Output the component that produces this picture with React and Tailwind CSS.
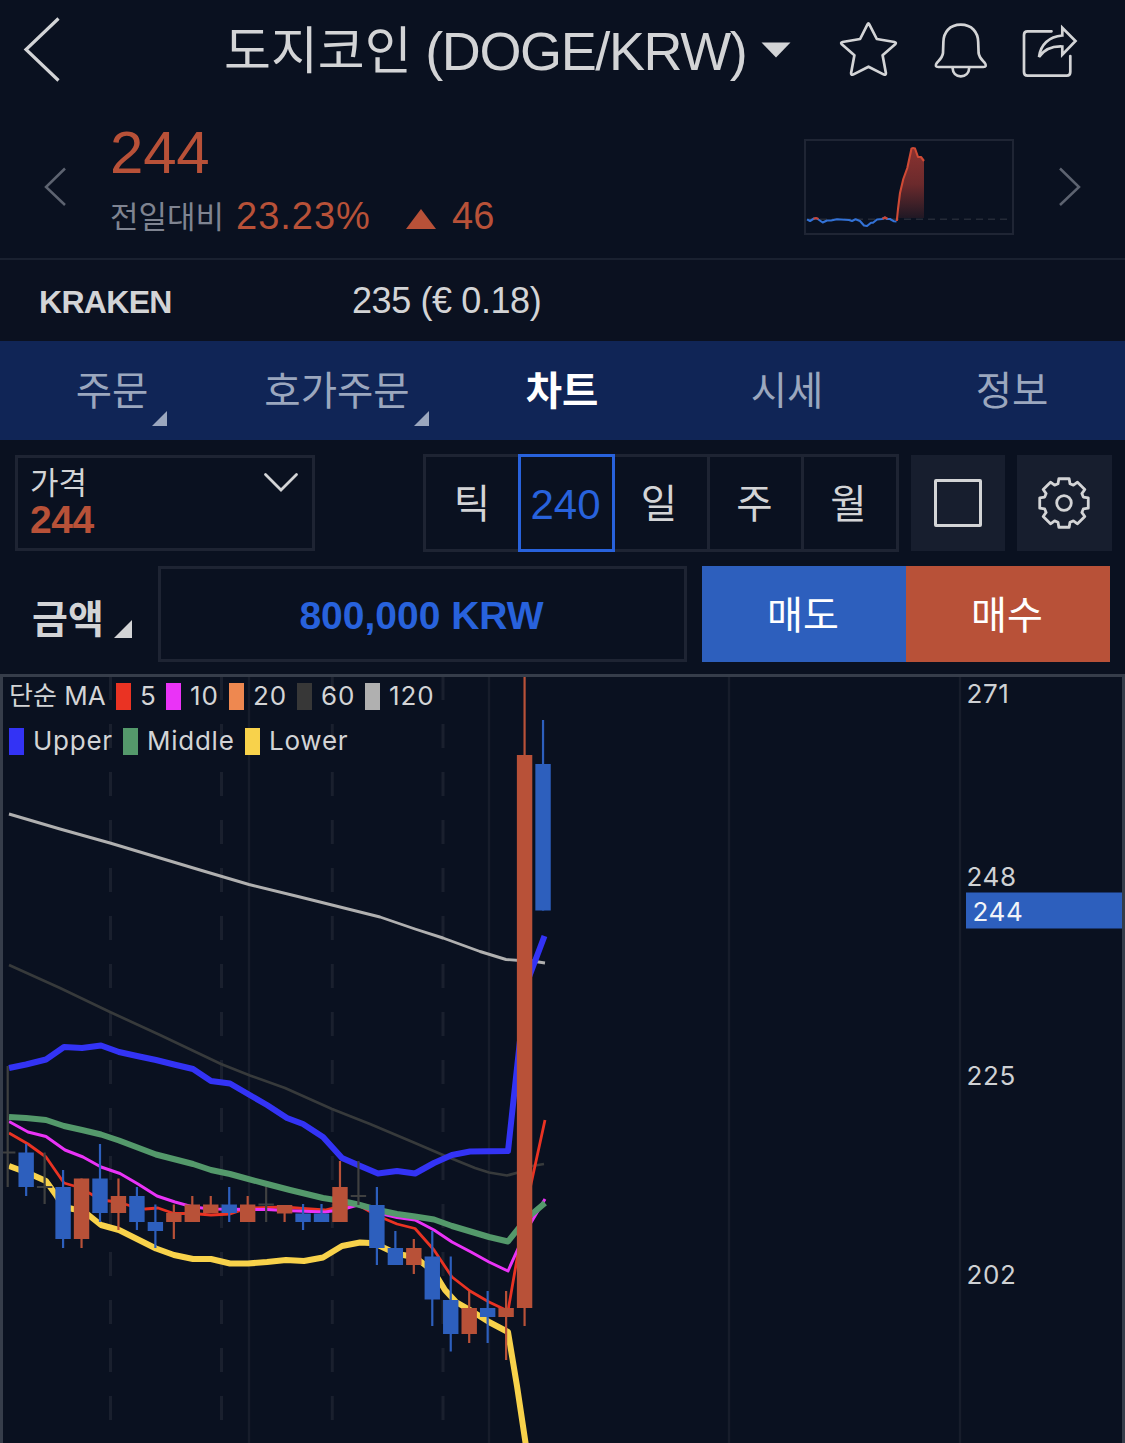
import React from 'react';

const RED = '#b85138';
const BLUE = '#2d5fbd';
const DOJI = '#3f4040';

const SANS = "font-['Liberation_Sans','Noto_Sans_CJK_KR',sans-serif]";

// [type, high, bodyTop, bodyBottom, low]
const candles = [
  ['d', 1066, 1152.5, 1152.5, 1187],
  ['b', 1144, 1152.5, 1187, 1196],
  ['d', 1152.5, 1187, 1187, 1204],
  ['b', 1170, 1187, 1239, 1248],
  ['r', 1178.5, 1178.5, 1239, 1248],
  ['b', 1144, 1178.5, 1213, 1222],
  ['r', 1178.5, 1196, 1213, 1230],
  ['b', 1187, 1196, 1222, 1230],
  ['b', 1204.5, 1222, 1231, 1248],
  ['r', 1204.5, 1213, 1222, 1239],
  ['r', 1196, 1204.5, 1222, 1222],
  ['r', 1196, 1204.5, 1213, 1213],
  ['b', 1187, 1204.5, 1213, 1222],
  ['r', 1196, 1204.5, 1222, 1222],
  ['d', 1187, 1204.5, 1204.5, 1222],
  ['r', 1205, 1205, 1213.5, 1222],
  ['b', 1204, 1213.5, 1222, 1230],
  ['b', 1204, 1213.5, 1222, 1222],
  ['r', 1161, 1187, 1222, 1222],
  ['d', 1161, 1196, 1196, 1205],
  ['b', 1187, 1205, 1248, 1265],
  ['b', 1231, 1248, 1265, 1265],
  ['r', 1239, 1248, 1265, 1274],
  ['b', 1231, 1256.5, 1299.5, 1326],
  ['b', 1256.5, 1300, 1334, 1351.5],
  ['r', 1291, 1308, 1334, 1343],
  ['b', 1291, 1308, 1317, 1343],
  ['r', 1291, 1308, 1317, 1360],
  ['r', 677, 755, 1308, 1326],
  ['b', 720, 764, 910.5, 910.5],
];

const lines = [
  { color: '#b0b0b0', w: 2.9, pts: '9,814 60,829 110,843 200,870 249,884.5 300,897 332,905 380,917 415,929 443,938 480,951.5 506,959.5 520,960.5 532,961 545,963' },
  { color: '#373a3b', w: 2.7, pts: '9,965 60,988 110,1012 160,1035 221,1064 250,1075.5 285,1088 332,1109 370,1124 415,1143 443,1155 475,1168 489,1172.5 507,1175.5 520,1172 532,1166 544,1164' },
  { color: '#ea3323', w: 2.8, pts: '9,1133 28,1144 46,1157 64,1183 76,1186.5 91,1194 101,1200 118,1202 131,1206 145,1209 158,1208 174,1213.5 193,1213.5 211,1215 230,1214 248,1208 284,1207 303,1208.5 325,1210 342,1206 358,1205 378,1216 397,1224 415,1228.5 434,1250 452,1277 470,1291 489,1302 508,1311 526,1207 545,1120' },
  { color: '#ea33f7', w: 3, pts: '9,1121.5 28,1132 46,1136.5 65,1150 83,1157 101,1167 120,1173.5 138,1184 157,1196 175,1202 193,1207 211,1209 267,1209.5 284,1210.5 325,1212 342,1209.5 358,1205 378,1213 397,1217.5 415,1220 434,1230 452,1242 471,1252 489,1262 508,1271 526,1231 545,1199' },
  { color: '#3333f5', w: 6, pts: '9,1068 26,1064.5 46,1059.5 64,1047 82,1048 101,1045.5 119,1052 137,1056 156,1060 174,1064.5 193,1069 211,1081 230,1083.5 248,1094 267,1105 287,1118 303,1124 323,1137 342,1158 358,1165 378,1173.5 397,1171 415,1173.5 434,1163 452,1155 470,1151.5 508,1151 526,985 544.5,936' },
  { color: '#54996b', w: 6, pts: '9,1117 26,1118 46,1120 64,1126 82,1130 101,1134.5 119,1140.5 156,1154.5 193,1164 211,1170 230,1174 267,1184 290,1190 323,1198 342,1201 358,1204.5 378,1210 397,1214 415,1216.5 434,1219.5 452,1226 489,1237 508,1241.5 526,1219 545,1203' },
  { color: '#f8d24b', w: 6, pts: '9,1166 28,1173 46,1181 56,1195 64,1207 73,1209 86,1213 101,1225 119,1230 137,1239 156,1248.5 174,1255 193,1259 211,1259 230,1263.5 248,1263.5 267,1262 286,1260 304,1261 323,1257.5 342,1246 360,1242.5 370,1243 378,1245 397,1254 415,1257 434,1272 445,1290 456,1302 470,1310 489,1322 508,1332 517,1386 526,1446' },
];

function Candle({ i, data }) {
  const [type, high, top, bottom, low] = data;
  const x = 7.7 + i * 18.46;
  const color = type === 'r' ? RED : type === 'b' ? BLUE : DOJI;
  return (
    <g fill={color}>
      <rect x={x - 1.1} y={high} width="2.2" height={low - high} />
      {type === 'd' ? (
        <rect x={x - 7.7} y={top - 1} width="15.4" height="2" />
      ) : (
        <rect x={x - 7.7} y={top} width="15.4" height={bottom - top} />
      )}
    </g>
  );
}

function Chart() {
  return (
    <svg className="block h-[766px] w-[1119px]" viewBox="3 677 1119 766">
      {[249, 489, 729, 960].map((x) => (
        <line key={x} x1={x} x2={x} y1="677" y2="1443" stroke="#171d2b" strokeWidth="2.4" />
      ))}
      {[110.5, 221.5, 332.3, 443].map((x) => (
        <line key={x} x1={x} x2={x} y1="676" y2="1443" stroke="#1a202e" strokeWidth="3" strokeDasharray="24 24" />
      ))}
      {lines.map((l) => (
        <polyline key={l.color} points={l.pts} fill="none" stroke={l.color} strokeWidth={l.w} strokeLinejoin="round" />
      ))}
      {candles.map((c, i) => (
        <Candle key={i} i={i} data={c} />
      ))}
      <rect x="966" y="892.5" width="156" height="36" fill={BLUE} />
      <g fill="#cfd1d4" fontFamily="Inter, sans-serif" fontSize="26" letterSpacing="0.6">
        <text x="966.5" y="703">271</text>
        <text x="966.5" y="886">248</text>
        <text x="972.5" y="921" fill="#f2f4f8">244</text>
        <text x="966.5" y="1085">225</text>
        <text x="966.5" y="1284">202</text>
      </g>
    </svg>
  );
}

function Sparkline() {
  return (
    <svg className="h-24 w-[210px]" viewBox="0 0 210 96" fill="none">
      <defs>
        <linearGradient id="rise" x1="0" y1="0" x2="0" y2="1">
          <stop offset="0" stopColor="#8a3230" />
          <stop offset="0.5" stopColor="#6b2a2c" />
          <stop offset="1" stopColor="#1b1724" />
        </linearGradient>
      </defs>
      <rect x="1" y="1" width="208" height="94" stroke="#1f2534" strokeWidth="2" />
      <path d="M4 80.300H204" stroke="#242a37" strokeWidth="1.500" strokeDasharray="7 5" />
      <path d="M92.700 81L96 54L99.300 40L103.300 29L107.500 9.500H111L114 18H117L120 22V79H93Z" fill="url(#rise)" />
      <path
        d="M3 80.300L6 82L10 79.500H13L18.700 83.500L23 81.500H27L33 80.300L45 81L48 82L51.500 80.300L56 82L60 86.500L63 87L67 83.700H69L73 80.500L78 80L81 78.500L83 80H86L90 82.300L92.500 82.500"
        stroke="#3372d6"
        strokeWidth="2.100"
        strokeLinejoin="round"
      />
      <path d="M9.500 79.700L12 79L14.500 80M78.500 79.800L81 78.500L83.500 79.800" stroke="#d04433" strokeWidth="2.100" />
      <path d="M92.800 82L94 70L96 54L99.300 40L103.300 29L107.500 9.500Q109 8.500 111 9.500L114 18H117L120 22" stroke="#cf4a35" strokeWidth="2.100" strokeLinejoin="round" />
    </svg>
  );
}

function HeaderIcons() {
  return (
    <svg className="h-[60px] w-[242px]" viewBox="838 19 242 60" fill="none" stroke="#d3d4d6" strokeWidth="2.700" strokeLinejoin="round" strokeLinecap="round">
      <path d="M867.500 23.300Q868.400 21.600 869.300 23.300L876.800 38L894.500 41Q896.800 41.600 895.200 43.300L882.600 54.300L885.900 72Q886 74.300 884 73.600L868.500 65.700L853 73.600Q851 74.300 851.100 72L854.400 54.300L841.800 43.300Q840.200 41.600 842.500 41L860.100 38Z" />
      <path d="M960.800 23.700C949.500 23.700 943.600 31.500 943.400 41L943 52C942.500 56.500 939.500 59 936.800 62C935 64.300 935.600 66 938.300 66H983.300C986 66 986.600 64.300 984.800 62C982.100 59 979.100 56.500 978.600 52L978.200 41C978 31.500 972 23.700 960.800 23.700Z" />
      <path d="M952.600 67C952.800 72 956 75.300 960.800 75.300C965.500 75.300 969 72 969.200 67" />
      <path d="M1051.500 30.300H1027.500Q1024 30.300 1024 34V71Q1024 74.700 1027.500 74.700H1066.800Q1070.300 74.700 1070.300 71V55" />
      <path d="M1062.300 26.800V34.500C1049 35.500 1040.500 43.500 1039 56C1044.500 48 1051.500 45 1062.300 45.500V53.600L1075.500 40Z" strokeLinejoin="miter" />
    </svg>
  );
}

function Gear() {
  const pts = [];
  const R = 24.8;
  const r = 20.2;
  for (let k = 0; k < 8; k++) {
    const a = (k * Math.PI) / 4 - Math.PI / 2;
    [[-0.3, r], [-0.21, R], [0.21, R], [0.3, r]].forEach(([d, q]) => {
      pts.push(`${(27 + q * Math.cos(a + d)).toFixed(2)},${(27 + q * Math.sin(a + d)).toFixed(2)}`);
    });
  }
  return (
    <svg className="size-[54px]" viewBox="0 0 54 54" fill="none" stroke="#d3d4d6" strokeWidth="2.800" strokeLinejoin="round">
      <polygon points={pts.join(' ')} />
      <circle cx="27" cy="27" r="7.300" />
    </svg>
  );
}

function Corner({ className }) {
  return (
    <svg className={className} viewBox="0 0 10 10" preserveAspectRatio="none" fill="currentColor">
      <path d="M10 0V10H0Z" />
    </svg>
  );
}

function Swatch({ color }) {
  return <span className={`mt-[3px] h-[27px] w-[15px] ${color}`} />;
}

const tabs = [
  { label: '주문', menu: true },
  { label: '호가주문', menu: true },
  { label: '차트', active: true },
  { label: '시세' },
  { label: '정보' },
];

export default function App() {
  return (
    <div className={`h-[1443px] w-[1125px] overflow-hidden bg-[#0a1120] text-[#d3d4d6] ${SANS}`}>
      <header className="flex h-[100px] items-center">
        <svg className="ml-5 h-[70px] w-[42px]" viewBox="20 15 42 70" fill="none" stroke="#d3d4d6" strokeWidth="3.200">
          <path d="M58.500 18.500L26 49.500L58.500 80.500" />
        </svg>
        <h1 className="ml-[162px] flex w-[529px] items-center whitespace-pre text-[54px] leading-[80px]">
          <span className="pt-1 text-[51px]">도지코인</span>
          <span className="pt-0.5 tracking-[-1.400px]"> (DOGE/KRW)</span>
        </h1>
        <svg className="ml-2 h-4 w-[30px]" viewBox="0 0 30 16" fill="#d3d4d6">
          <path d="M0.500 0.500H29.500L15 15.500Z" />
        </svg>
        <div className="-mt-px ml-[47px]"><HeaderIcons /></div>
      </header>

      <section className="flex h-[160px] items-start border-b-2 border-[#1a2130]">
        <svg className="ml-[44px] mt-[66px] h-[42px] w-[24px]" viewBox="0 0 24 42" fill="none" stroke="#5d6370" strokeWidth="2.500">
          <path d="M21 2.500L2 21L21 39" />
        </svg>
        <div className="ml-[42px] mt-[21px] w-[694px] text-[#b85138]">
          <div className="text-[60px] leading-[64px] tracking-[-0.200px]">244</div>
          <div className="mt-[7px] flex h-12 items-center text-[38px]">
            <span className="w-[126px] whitespace-nowrap pt-1 text-[31px] text-[#7f8491]">전일대비</span>
            <span className="w-[170px] tracking-[1px]">23.23%</span>
            <svg className="mt-1.5 h-5 w-[30px]" viewBox="0 0 30 20" fill={RED}>
              <path d="M0 20L15 0L30 20Z" />
            </svg>
            <span className="ml-4">46</span>
          </div>
        </div>
        <div className="mt-[39px]"><Sparkline /></div>
        <svg className="ml-[44px] mt-[66px] h-[42px] w-[24px]" viewBox="0 0 24 42" fill="none" stroke="#5d6370" strokeWidth="2.500">
          <path d="M2 2.500L21 21L2 39" />
        </svg>
      </section>

      <section className="flex h-[81px] items-center bg-[#0b1120]">
        <span className="ml-[39px] mt-0.5 w-[313px] text-[32px] font-bold tracking-[-0.700px]">KRAKEN</span>
        <span className="text-[36px] tracking-[-0.400px]">235 (€ 0.18)</span>
      </section>

      <nav className="grid h-[99px] grid-cols-5 bg-[#102556] text-[39.500px] text-[#9ba7be]">
        {tabs.map((t) => (
          <div key={t.label} className={t.active ? 'relative flex items-center justify-center font-bold text-white' : 'relative flex items-center justify-center'}>
            <span className="relative whitespace-nowrap pr-px pt-[3px] leading-none">
              {t.label}
              {t.menu && <Corner className="absolute -bottom-[14px] -right-[18px] size-[15px]" />}
            </span>
          </div>
        ))}
      </nav>

      <section className="flex h-[112px] items-start pt-[14px]">
        <div className="ml-[15px] mt-px flex h-[96px] w-[300px] justify-between border-[3px] border-[#1e2433] px-3">
          <div className="pt-1.5">
            <div className="text-[31px] leading-[40px]">가격</div>
            <div className="text-[39px] font-bold leading-[32px] tracking-[-0.400px] text-[#b85138]">244</div>
          </div>
          <svg className="mr-px mt-[14px] h-[22px] w-[36px]" viewBox="0 0 36 22" fill="none" stroke="#d3d4d6" strokeWidth="2.800" strokeLinecap="round">
            <path d="M2.500 2.500L18 18L33.500 2.500" />
          </svg>
        </div>
        <div className="ml-[108px] flex h-[98px] w-[476px] items-stretch border-[3px] border-[#1e2433] text-[39.500px]">
          <div className="flex w-[92px] items-center justify-center pt-1">틱</div>
          <div className="-my-[3px] flex w-[97px] items-center justify-center border-[3px] border-[#2862dc] pt-0.5 pr-0.5 text-[42px] text-[#2862dc]">240</div>
          <div className="flex w-[95px] items-center justify-center border-r-[3px] border-[#1e2433] pt-1 pr-1">일</div>
          <div className="flex w-[94px] items-center justify-center border-r-[3px] border-[#1e2433] pt-1 pr-0.5">주</div>
          <div className="flex flex-1 items-center justify-center pt-1 pr-[3px]">월</div>
        </div>
        <div className="ml-3 mt-px flex h-[96px] w-[94px] items-center justify-center bg-[#171e2e]">
          <div className="size-[48px] rounded-xs border-[3px] border-[#d3d4d6]" />
        </div>
        <div className="ml-3 mt-px flex h-[96px] w-[95px] items-center justify-center bg-[#171e2e] pr-px"><Gear /></div>
      </section>

      <section className="flex h-[122px] items-start pt-[14px]">
        <div className="flex h-24 w-[158px] items-center pl-8 pt-3">
          <span className="text-[39px] font-bold">금액</span>
          <Corner className="ml-[10px] mt-[18px] size-[18px]" />
        </div>
        <div className="flex h-24 w-[529px] items-center justify-center border-[3px] border-[#1e2433] pr-0.5 pt-1 text-[39px] font-bold text-[#2862dc]">800,000 KRW</div>
        <div className="ml-[15px] flex h-24 w-[408px] text-[39px] text-white">
          <div className="flex flex-1 items-center justify-center bg-[#2d5fbd] pr-0.5 pt-1">매도</div>
          <div className="flex flex-1 items-center justify-center bg-[#b85138] pr-0.5 pt-1">매수</div>
        </div>
      </section>

      <main className="relative h-[769px] border-x-[3px] border-t-[3px] border-[#363d4a]">
        <Chart />
        <div className="absolute -top-0.5 left-1.5 flex flex-col font-['Inter','Noto_Sans_CJK_KR',sans-serif] text-[26px] tracking-[0.900px]">
          <div className="flex h-10 items-center">
            <span className="w-[107px] whitespace-nowrap tracking-normal">단순 MA</span>
            <Swatch color="bg-[#ea3323]" /><span className="w-[35px] pl-[9px]">5</span>
            <Swatch color="bg-[#ea33f7]" /><span className="w-[48px] pl-[9px]">10</span>
            <Swatch color="bg-[#ee8850]" /><span className="w-[53px] pl-[9px]">20</span>
            <Swatch color="bg-[#373737]" /><span className="w-[53px] pl-[9px]">60</span>
            <Swatch color="bg-[#b0b0b0]" /><span className="pl-[9px]">120</span>
          </div>
          <div className="mt-[5px] flex h-10 items-center tracking-[0.750px]">
            <Swatch color="bg-[#3333f5]" /><span className="w-[99px] pl-[9px]">Upper</span>
            <Swatch color="bg-[#54996b]" /><span className="w-[107px] pl-[9px]">Middle</span>
            <Swatch color="bg-[#f8d24b]" /><span className="pl-[9px]">Lower</span>
          </div>
        </div>
      </main>
    </div>
  );
}
